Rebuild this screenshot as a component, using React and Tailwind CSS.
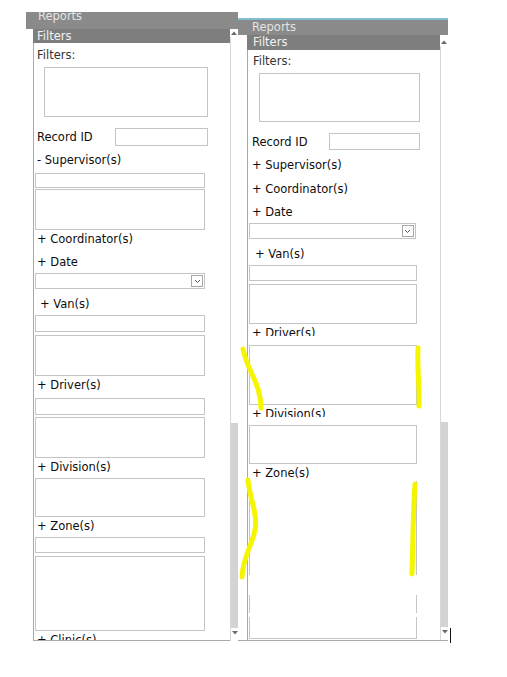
import React from 'react';

// label row in the filter panel
const Label = ({ children, className = '' }) => (
  <div className={`h-4 leading-4 text-[11.5px] text-[#0d0d0d] whitespace-nowrap ${className}`}>{children}</div>
);

const Box = ({ className = '' }) => <div className={`border border-[#c4c4c4] bg-white shrink-0 ${className}`} />;

const Select = ({ className = '' }) => (
  <div className={`border border-[#c4c4c4] bg-white shrink-0 flex items-center justify-end pr-px ${className}`}>
    <div className="w-[12px] h-[12px] border border-[#a8a8a8] bg-white flex items-center justify-center">
      <svg width="7" height="5" viewBox="0 0 7 5">
        <path d="M1 1 L3.5 3.5 L6 1" fill="none" stroke="#555" strokeWidth="1" />
      </svg>
    </div>
  </div>
);

const Arrow = ({ down }) => (
  <svg width="6" height="4" viewBox="0 0 6 4">
    <path d={down ? 'M0 0 H6 L3 3.5 Z' : 'M0 4 H6 L3 0.5 Z'} fill="#6a6a6a" />
  </svg>
);

// thin scrollbar: white track, grey thumb at the bottom
function Scrollbar({ className = '', topPad = 'h-[10px]' }) {
  return (
    <div className={`w-[8px] flex flex-col bg-white ${className}`}>
      <div className={`${topPad} flex items-end justify-center pb-[2px]`}>
        <Arrow />
      </div>
      <div className="flex-1 flex flex-col justify-end border-l border-[#d8d8d8]">
        <div className="h-[205px] bg-[#d3d3d3]" />
      </div>
      <div className="h-[13px] flex items-start justify-center pt-[3px] border-l border-[#d8d8d8]">
        <Arrow down />
      </div>
    </div>
  );
}

function Seg() {
  return (
    <div className="w-px flex flex-col">
      <div className="h-[95px] bg-[#c4c4c4]" />
      <div className="h-[20px]" />
      <div className="h-[18px] bg-[#c4c4c4]" />
      <div className="h-[4px]" />
      <div className="h-[21px] bg-[#c4c4c4]" />
    </div>
  );
}

function LeftScreen() {
  return (
    <div className="w-[212px] mt-[12px] flex flex-col">
      <div className="h-[17px] bg-[#8a8a8a] overflow-hidden">
        <div className="ml-[12px] -mt-[3px] leading-[14px] text-[11.5px] text-[#e4e4e4]">Reports</div>
      </div>
      <div className="flex">
        <div className="w-[7px]" />
        <div className="w-[197px] flex flex-col">
          <div className="h-[14px] bg-[#7e7e7e] leading-[14px] pl-[4px] text-[11.5px] text-[#f2f2f2]">Filters</div>
          <div className="h-[598px] border-l border-b border-[#a9a9a9] overflow-hidden flex flex-col">
            <Label className="mt-[4px] ml-[3px] text-[#333]">Filters:</Label>
            <Box className="mt-[4px] ml-[10px] w-[164px] h-[50px]" />
            <div className="mt-[11px] flex items-center h-[18px]">
              <Label className="w-[81px] pl-[3px]">Record ID</Label>
              <Box className="w-[93px] h-[18px]" />
            </div>
            <Label className="mt-[6px] ml-[3px]">- Supervisor(s)</Label>
            <Box className="mt-[5px] ml-px w-[170px] h-[15px]" />
            <Box className="mt-[1px] ml-px w-[170px] h-[41px]" />
            <Label className="mt-[1px] ml-[3px]">+ Coordinator(s)</Label>
            <Label className="mt-[7px] ml-[3px]">+ Date</Label>
            <Select className="mt-[3px] ml-px w-[170px] h-[16px]" />
            <Label className="mt-[7px] ml-[6px]">+ Van(s)</Label>
            <Box className="mt-[3px] ml-px w-[170px] h-[17px]" />
            <Box className="mt-[3px] ml-px w-[170px] h-[41px]" />
            <Label className="mt-[1px] ml-[3px]">+ Driver(s)</Label>
            <Box className="mt-[5px] ml-px w-[170px] h-[17px]" />
            <Box className="mt-[2px] ml-px w-[170px] h-[41px]" />
            <Label className="mt-[1px] ml-[3px]">+ Division(s)</Label>
            <Box className="mt-[3px] ml-px w-[170px] h-[39px]" />
            <Label className="mt-[1px] ml-[3px]">+ Zone(s)</Label>
            <Box className="mt-[3px] ml-px w-[170px] h-[16px]" />
            <Box className="mt-[3px] ml-px w-[170px] h-[75px]" />
            <Label className="mt-[1px] ml-[3px] shrink-0">+ Clinic(s)</Label>
          </div>
        </div>
        <Scrollbar className="h-[612px]" topPad="h-[8px]" />
      </div>
    </div>
  );
}

function RightScreen() {
  return (
    <div className="w-[212px] mt-[18px] flex flex-col">
      <div className="h-[2px] w-[210px] bg-[#7fbfd2]" />
      <div className="h-[15px] w-[210px] bg-[#8a8a8a] leading-[15px] pl-[14px] text-[11.5px] text-[#e4e4e4]">Reports</div>
      <div className="flex border-b border-[#a9a9a9] w-[210px]">
        <div className="w-[9px]" />
        <div className="w-[195px] flex flex-col">
          <div className="h-[15px] bg-[#7e7e7e] leading-[15px] pl-[6px] text-[11.5px] text-[#f2f2f2]">Filters</div>
          <div className="h-[590px] border-l border-[#a9a9a9] overflow-hidden flex flex-col">
            <Label className="mt-[3px] ml-[5px] text-[#333]">Filters:</Label>
            <Box className="mt-[4px] ml-[11px] w-[161px] h-[49px]" />
            <div className="mt-[11px] flex items-center h-[17px]">
              <Label className="w-[81px] pl-[4px]">Record ID</Label>
              <Box className="w-[91px] h-[17px]" />
            </div>
            <Label className="mt-[7px] ml-[4px]">+ Supervisor(s)</Label>
            <Label className="mt-[8px] ml-[4px]">+ Coordinator(s)</Label>
            <Label className="mt-[7px] ml-[4px]">+ Date</Label>
            <Select className="mt-[3px] ml-px w-[167px] h-[16px]" />
            <Label className="mt-[7px] ml-[7px]">+ Van(s)</Label>
            <Box className="mt-[3px] ml-px w-[168px] h-[16px]" />
            <Box className="mt-[3px] ml-px w-[168px] h-[40px]" />
            <div className="mt-[1px] h-[11px] overflow-hidden shrink-0">
              <Label className="ml-[4px]">+ Driver(s)</Label>
            </div>
            <Box className="mt-[9px] ml-px w-[168px] h-[60px]" />
            <div className="mt-px h-[11px] overflow-hidden shrink-0">
              <Label className="ml-[4px]">+ Division(s)</Label>
            </div>
            <Box className="mt-[8px] ml-px w-[168px] h-[39px]" />
            <Label className="mt-[1px] ml-[4px]">+ Zone(s)</Label>
            <div className="ml-px w-[168px] h-[158px] flex justify-between border-b border-[#c4c4c4] shrink-0">
              <Seg />
              <Seg />
            </div>
          </div>
        </div>
        <Scrollbar className="h-[605px]" topPad="h-[11px]" />
      </div>
    </div>
  );
}

export default function App() {
  return (
    <div
      className="relative w-[507px] h-[677px] bg-white overflow-hidden flex items-start"
      style={{ fontFamily: '"DejaVu Sans", Verdana, sans-serif' }}
    >
      <div className="w-[26px]" />
      <LeftScreen />
      <RightScreen />
      <div className="mt-[628px] w-px h-[15px] bg-[#111]" />

      {/* highlighter marks drawn over the screenshot */}
      <svg className="absolute inset-0 pointer-events-none" width="507" height="677">
        <g fill="none" stroke="#f5f500" strokeWidth="5" strokeLinecap="round">
          <path d="M243 349 C247 370 261 384 261 408" />
          <path d="M418 348 C417 370 420 390 419 406" />
          <path d="M248 480 C250 500 258 514 255 530 C252 546 243 556 242 577" />
          <path d="M415 484 C413 510 413 545 412 574" />
        </g>
      </svg>
    </div>
  );
}
